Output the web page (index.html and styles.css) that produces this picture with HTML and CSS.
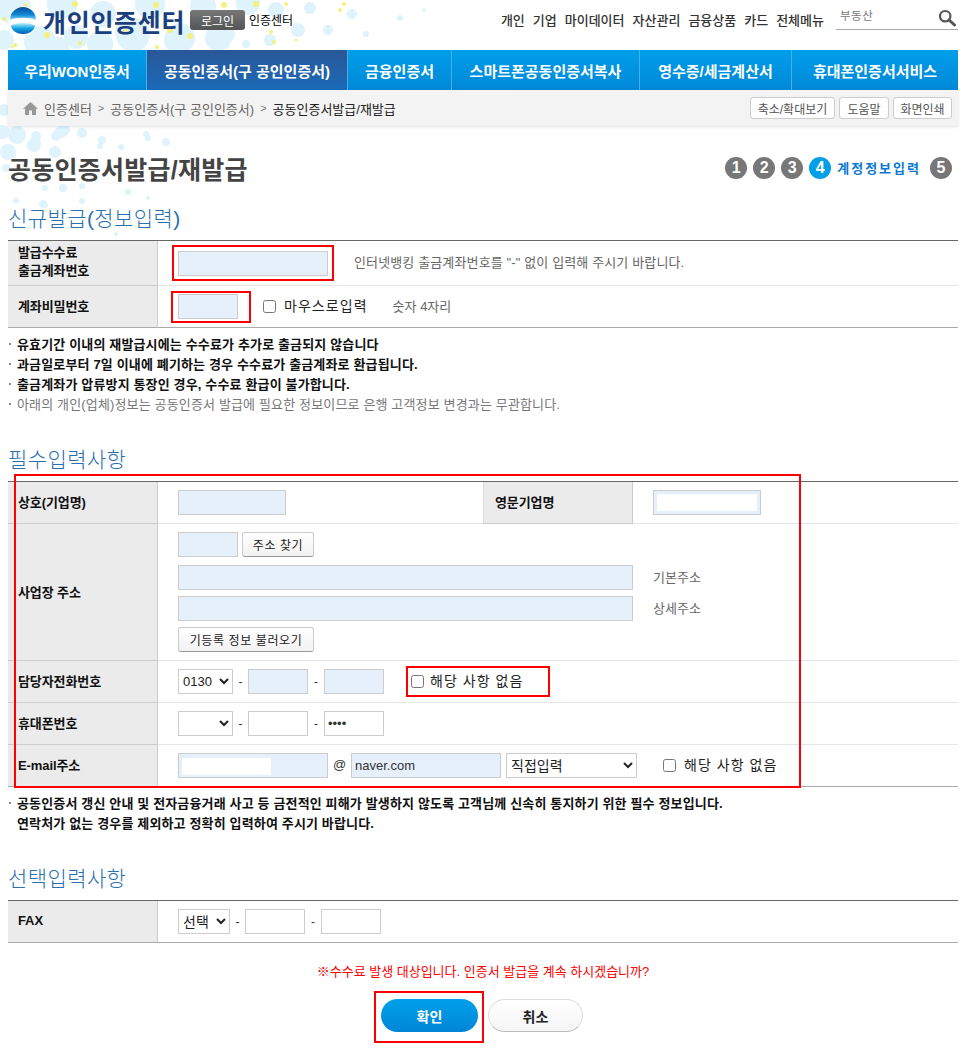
FILE: index.html
```html
<!DOCTYPE html>
<html lang="ko">
<head>
<meta charset="utf-8">
<title>공동인증서발급/재발급</title>
<link rel="stylesheet" href="styles.css">
</head>
<body>
<div class="page">
  <svg class="deco" width="520" height="310" viewBox="0 0 520 310" aria-hidden="true">
    <g fill="#def3fc">
      <circle cx="14" cy="8" r="17"/><circle cx="62" cy="4" r="15"/><circle cx="103" cy="14" r="13"/><circle cx="150" cy="4" r="15"/><circle cx="203" cy="6" r="13"/><circle cx="248" cy="3" r="12"/><circle cx="180" cy="38" r="15"/><circle cx="133" cy="35" r="17"/><circle cx="76" cy="37" r="12"/><circle cx="4" cy="40" r="10"/><circle cx="40" cy="42" r="16"/><circle cx="100" cy="44" r="13"/><circle cx="218" cy="38" r="13"/><circle cx="130" cy="32" r="15"/><circle cx="225" cy="34" r="10"/><circle cx="58" cy="48" r="11"/><circle cx="178" cy="40" r="14"/><circle cx="224" cy="43" r="6"/><circle cx="276" cy="10" r="8"/><circle cx="310" cy="8" r="6"/><circle cx="328" cy="30" r="5"/><circle cx="352" cy="14" r="5"/><circle cx="298" cy="30" r="7"/><circle cx="270" cy="40" r="6"/><circle cx="246" cy="44" r="4"/><circle cx="366" cy="34" r="3"/><circle cx="400" cy="18" r="3"/><circle cx="424" cy="10" r="2"/><circle cx="4" cy="110" r="6"/><circle cx="3" cy="132" r="7"/>
      <circle cx="16" cy="134" r="7"/><circle cx="64" cy="130" r="6"/><circle cx="17" cy="135" r="9"/><circle cx="36" cy="136" r="5"/><circle cx="61" cy="132" r="6"/><circle cx="35" cy="143" r="6"/><circle cx="82" cy="133" r="5"/><circle cx="56" cy="136" r="5"/><circle cx="34" cy="145" r="7"/><circle cx="8" cy="152" r="8"/><circle cx="100" cy="146" r="3"/><circle cx="146" cy="134" r="3"/><circle cx="166" cy="142" r="4"/><circle cx="102" cy="140" r="4"/><circle cx="55" cy="152" r="6"/><circle cx="121" cy="147" r="3"/><circle cx="148" cy="138" r="3"/><circle cx="6" cy="168" r="4"/><circle cx="45" cy="188" r="3"/><circle cx="43" cy="204" r="4"/><circle cx="17" cy="180" r="3"/><circle cx="63" cy="188" r="4"/><circle cx="82" cy="186" r="3"/><circle cx="128" cy="192" r="3"/><circle cx="16" cy="201" r="3"/><circle cx="45" cy="205" r="3"/><circle cx="82" cy="201" r="3"/><circle cx="128" cy="193" r="2"/><circle cx="148" cy="198" r="2"/><circle cx="116" cy="234" r="2"/><circle cx="30" cy="220" r="2"/>
    </g>
    <g fill="#f5f07c">
      <circle cx="26" cy="5" r="2"/><circle cx="75" cy="4" r="3"/><circle cx="156" cy="5" r="3"/><circle cx="224" cy="5" r="3"/><circle cx="256" cy="4" r="3"/><circle cx="4" cy="19" r="2"/><circle cx="47" cy="35" r="3"/><circle cx="15" cy="45" r="2"/><circle cx="125" cy="31" r="2"/><circle cx="170" cy="30" r="3"/><circle cx="80" cy="43" r="2"/><circle cx="190" cy="36" r="3"/><circle cx="157" cy="47" r="2"/><circle cx="271" cy="32" r="2"/><circle cx="286" cy="4" r="2"/><circle cx="340" cy="10" r="2"/><circle cx="274" cy="42" r="2"/><circle cx="296" cy="40" r="1.5"/><circle cx="344" cy="4" r="2"/><circle cx="12" cy="47" r="1.5"/>
    </g>
  </svg>

  <header class="top">
    <div class="brand">
      <svg class="logo" width="30" height="30" viewBox="0 0 30 30" aria-hidden="true">
        <defs>
          <linearGradient id="dome" x1="0" y1="0" x2="0" y2="1"><stop offset="0" stop-color="#0b4a9e"/><stop offset=".6" stop-color="#0d8ad6"/><stop offset="1" stop-color="#8fdcf6"/></linearGradient>
          <linearGradient id="base" x1="0" y1="0" x2="0" y2="1"><stop offset="0" stop-color="#bdeefb"/><stop offset=".5" stop-color="#12a2e4"/><stop offset="1" stop-color="#0a5cb4"/></linearGradient>
        </defs>
        <circle cx="15" cy="15" r="14.5" fill="#fff"/>
        <path d="M2 14A13 13 0 0 1 28 14C22 11 8 11 2 14Z" fill="url(#dome)"/>
        <path d="M2.6 20C7 16 23 16 27.4 20A13 13 0 0 1 15 28A13 13 0 0 1 2.6 20Z" fill="url(#base)"/>
      </svg>
      <span class="brand-name">개인인증센터</span>
      <a class="login">로그인</a>
      <span class="brand-sub">인증센터</span>
    </div>
    <nav class="util">
      <a>개인</a><a>기업</a><a>마이데이터</a><a>자산관리</a><a>금융상품</a><a>카드</a><a>전체메뉴</a>
    </nav>
    <div class="search">
      <span>부동산</span>
      <svg width="18" height="18" viewBox="0 0 18 18" aria-hidden="true"><circle cx="7.2" cy="7.2" r="5.2" fill="none" stroke="#555" stroke-width="2.2"/><path d="M11 11l5.5 5" stroke="#555" stroke-width="3" stroke-linecap="round"/></svg>
    </div>
  </header>

  <nav class="gnb">
    <a class="w1">우리WON인증서</a>
    <a class="w2 on">공동인증서(구 공인인증서)</a>
    <a class="w3">금융인증서</a>
    <a class="w4">스마트폰공동인증서복사</a>
    <a class="w5">영수증/세금계산서</a>
    <a class="w6">휴대폰인증서서비스</a>
  </nav>

  <div class="crumb">
    <svg class="home" width="15" height="13" viewBox="0 0 15 13" aria-hidden="true"><path d="M7.5 0L15 6.8H13V13H9V8.5H6V13H2V6.8H0Z" fill="#999"/></svg>
    <span class="c-item">인증센터</span><span class="c-sep">&gt;</span>
    <span class="c-item">공동인증서(구 공인인증서)</span><span class="c-sep">&gt;</span>
    <span class="c-now">공동인증서발급/재발급</span>
    <div class="c-tools">
      <button class="tool t85">축소/확대보기</button><button class="tool t50">도움말</button><button class="tool t59">화면인쇄</button>
    </div>
  </div>

  <div class="title-row">
    <h1>공동인증서발급/재발급</h1>
    <ol class="steps">
      <li class="dot">1</li><li class="dot">2</li><li class="dot">3</li><li class="dot on">4</li>
      <li class="step-label">계정정보입력</li><li class="dot">5</li>
    </ol>
  </div>

  <h2>신규발급(정보입력)</h2>
  <table class="form">
    <colgroup><col class="c-th"><col></colgroup>
    <tr class="r45">
      <th class="two-line">발급수수료<br>출금계좌번호</th>
      <td><div class="line">
        <span class="mark m-acc"><input class="in i150" type="text"></span>
        <span class="hint h-acc">인터넷뱅킹 출금계좌번호를 "-" 없이 입력해 주시기 바랍니다.</span>
      </div></td>
    </tr>
    <tr>
      <th>계좌비밀번호</th>
      <td class="td-pw"><div class="line">
        <span class="mark m-pw"><input class="in i60" type="text"></span>
        <label class="check c-mouse"><input type="checkbox">마우스로입력</label>
        <span class="hint h-pw">숫자 4자리</span>
      </div></td>
    </tr>
  </table>

  <ul class="notes">
    <li>유효기간 이내의 재발급시에는 수수료가 추가로 출금되지 않습니다</li>
    <li>과금일로부터 7일 이내에 폐기하는 경우 수수료가 출금계좌로 환급됩니다.</li>
    <li>출금계좌가 압류방지 통장인 경우, 수수료 환급이 불가합니다.</li>
    <li class="soft">아래의 개인(업체)정보는 공동인증서 발급에 필요한 정보이므로 은행 고객정보 변경과는 무관합니다.</li>
  </ul>

  <h2>필수입력사항</h2>
  <div class="req-wrap">
    <table class="form">
      <colgroup><col class="c-th"><col class="c-mid"><col class="c-th"><col></colgroup>
      <tr>
        <th>상호(기업명)</th>
        <td><input class="in i108" type="text"></td>
        <th class="th-mid">영문기업명</th>
        <td class="td-eng"><input class="in i108 masked" type="text"></td>
      </tr>
      <tr class="r137">
        <th>사업장 주소</th>
        <td colspan="3">
          <div class="addr">
            <div class="line"><input class="in i60" type="text"><button class="btn b-find">주소 찾기</button></div>
            <div class="line"><input class="in i455" type="text"><span class="hint h-addr">기본주소</span></div>
            <div class="line"><input class="in i455" type="text"><span class="hint h-addr">상세주소</span></div>
            <div class="line"><button class="btn b-load">기등록 정보 불러오기</button></div>
          </div>
        </td>
      </tr>
      <tr>
        <th>담당자전화번호</th>
        <td colspan="3"><div class="line">
          <select class="sel s55"><option>0130</option></select><span class="dash">-</span>
          <input class="in i60" type="text"><span class="dash d16">-</span>
          <input class="in i60" type="text">
          <span class="mark m-none"><label class="check"><input type="checkbox">해당 사항 없음</label></span>
        </div></td>
      </tr>
      <tr>
        <th>휴대폰번호</th>
        <td colspan="3"><div class="line">
          <select class="sel s55"><option></option></select><span class="dash">-</span>
          <input class="in i60 plain" type="text"><span class="dash d16">-</span>
          <input class="in i60 plain" type="password" value="1234">
        </div></td>
      </tr>
      <tr>
        <th>E-mail주소</th>
        <td colspan="3"><div class="line">
          <span class="redact-box"><input class="in i150" type="text"><span class="redact"></span></span>
          <span class="at">@</span>
          <input class="in i150 dom" type="text" value="naver.com">
          <select class="sel s131"><option>직접입력</option></select>
          <label class="check c-mail"><input type="checkbox">해당 사항 없음</label>
        </div></td>
      </tr>
    </table>
    <div class="big-mark"></div>
  </div>

  <ul class="notes">
    <li class="two">공동인증서 갱신 안내 및 전자금융거래 사고 등 금전적인 피해가 발생하지 않도록 고객님께 신속히 통지하기 위한 필수 정보입니다.<br>연락처가 없는 경우를 제외하고 정확히 입력하여 주시기 바랍니다.</li>
  </ul>

  <h2>선택입력사항</h2>
  <table class="form">
    <colgroup><col class="c-th"><col></colgroup>
    <tr>
      <th>FAX</th>
      <td><div class="line">
        <select class="sel s52"><option>선택</option></select><span class="dash">-</span>
        <input class="in i60 plain" type="text"><span class="dash d16">-</span>
        <input class="in i60 plain" type="text">
      </div></td>
    </tr>
  </table>

  <p class="warn">※수수료 발생 대상입니다. 인증서 발급을 계속 하시겠습니까?</p>
  <div class="actions">
    <span class="mark m-ok"><button class="pill ok">확인</button></span>
    <button class="pill cancel">취소</button>
  </div>
</div>
</body>
</html>
```

FILE: styles.css
```css
* { box-sizing: border-box; }
html, body { margin: 0; padding: 0; background: #fff; }
body { font-family: "Liberation Sans", "Noto Sans CJK KR", sans-serif; font-size: 13px; color: #000; }
a { color: inherit; text-decoration: none; }

.page { position: relative; z-index: 0; width: 966px; height: 1053px; padding: 0 8px; overflow: hidden; }
.deco { position: absolute; left: 0; top: 0; z-index: -1; }

/* header */
.top { display: flex; align-items: flex-start; height: 50px; }
.brand { display: flex; align-items: center; height: 42px; }
.logo { margin: 0 5px 0 0; }
.brand-name { font-size: 25px; font-weight: 700; color: #1b3f7e; letter-spacing: .7px; width: 147px; white-space: nowrap; }
.login { display: flex; align-items: center; justify-content: center; width: 55px; height: 20px; margin-top: -2px; border-radius: 3px; background: linear-gradient(#777, #555); color: #fff; font-size: 12px; }
.brand-sub { margin: -3px 0 0 4px; font-size: 12px; }
.util { display: flex; gap: 8px; margin-left: auto; padding-top: 10px; font-size: 13px; font-weight: 500; color: #333; white-space: nowrap; }
.search { display: flex; justify-content: space-between; width: 122px; height: 30px; margin-left: 12px; padding: 7px 2px 0 4px; border-bottom: 1px solid #aaa; color: #777; font-size: 11.5px; letter-spacing: .5px; }
.search svg { margin-top: 2px; }

/* main nav */
.gnb { display: flex; height: 40px; background: linear-gradient(#009ee9, #0088d8); }
.gnb a { display: flex; align-items: center; justify-content: center; height: 40px; border-right: 1px solid #4aaee8; color: #fff; font-size: 15px; font-weight: 700; white-space: nowrap; }
.gnb .on { background: linear-gradient(#2a5798, #1b6ab8); }
.gnb .w1 { width: 139px; }
.gnb .w2 { width: 201px; }
.gnb .w3 { width: 104px; }
.gnb .w4 { width: 188px; }
.gnb .w5 { width: 152px; }
.gnb .w6 { width: 166px; border-right: 0; }

/* breadcrumb */
.crumb { display: flex; align-items: center; height: 36px; padding-left: 15px; background: #f3f3f3; box-shadow: 0 1px 3px rgba(0,0,0,.12); color: #666; font-size: 13px; white-space: nowrap; }
.home { margin-right: 6px; }
.c-sep { margin: 0 6px; color: #777; font-size: 11px; }
.c-now { color: #222; }
.c-tools { display: flex; gap: 4px; margin-left: auto; margin-right: 6px; }
.tool { height: 22px; padding: 0; border: 1px solid #ccc; border-radius: 3px; background: #fff; color: #555; font: inherit; font-size: 12px; }
.t85 { width: 85px; }
.t50 { width: 50px; }
.t59 { width: 59px; }

/* title */
.title-row { display: flex; align-items: center; justify-content: space-between; height: 32px; margin: 26px 0 18px; }
h1 { margin: 0; font-size: 25px; font-weight: 700; color: #444; letter-spacing: .25px; }
.steps { display: flex; align-items: center; gap: 6px; margin: 0 6px 0 0; padding: 0; list-style: none; }
.dot { display: flex; align-items: center; justify-content: center; width: 22px; height: 22px; border-radius: 50%; background: #777; color: #fff; font-size: 16px; font-weight: 700; }
.dot.on { background: #009fe8; }
.step-label { margin: -2px 3px 0 0; color: #0a78d4; font-size: 13px; font-weight: 700; letter-spacing: 2px; }

h2 { height: 30px; margin: 0 0 8px; font-size: 21px; font-weight: 300; line-height: 34px; color: #2a6fb0; letter-spacing: .4px; }

/* tables */
.form { width: 950px; border-collapse: separate; border-spacing: 0; border-top: 1px solid #666; table-layout: fixed; }
.c-th { width: 150px; }
.c-mid { width: 325px; }
.form tr { height: 42px; }
.form tr.r45 { height: 45px; }
.form tr.r137 { height: 137px; }
.form th { padding: 0 0 2px 10px; border-right: 1px solid #ccc; border-bottom: 1px solid #ccc; background: #ebebeb; color: #111; font-size: 13px; font-weight: 700; text-align: left; letter-spacing: -.1px; }
.form th.two-line { line-height: 18px; }
.form th.th-mid { padding-left: 11px; border-left: 1px solid #ddd; }
.form td { padding: 0 0 0 20px; border-bottom: 1px solid #e5e5e5; }
.form tr:last-child th, .form tr:last-child td { border-bottom-color: #aaa; }
.form .td-eng { padding-left: 20px; }
.line { display: flex; align-items: center; white-space: nowrap; }

.in { height: 25px; padding: 0 3px; border: 1px solid #ccc; background: #e6f0fa; font: inherit; font-size: 13px; color: #333; }
.i60 { width: 60px; }
.i108 { width: 108px; }
.i150 { width: 150px; }
.i455 { width: 455px; }
.plain { background: #fff; }
.masked { box-shadow: inset 0 0 0 3px #e6f0fa; background: #fff; }
.dom { margin-left: 0; }
.sel { height: 25px; border: 1px solid #ccc; border-radius: 0; background: #fff; font: inherit; font-size: 14px; color: #222; }
.s52 { width: 52px; }
.s55 { width: 55px; font-size: 13px; }
.s131 { width: 131px; margin-left: 5px; }
.dash { width: 15px; text-align: center; color: #333; font-size: 12px; }
.d16 { width: 16px; }
.at { width: 23px; padding-bottom: 3px; text-align: center; font-size: 13px; color: #333; }

.mark { display: inline-flex; align-items: center; border: 2px solid #f00; }
.m-acc { width: 162px; height: 36px; margin-left: -6px; padding-left: 4px; }
.m-pw { width: 80px; height: 32px; margin-left: -7px; padding-left: 5px; }
.m-none { width: 144px; height: 31px; margin-left: 22px; padding-left: 3px; }
.m-ok { width: 110px; height: 52px; padding: 6px 0 0 5px; align-items: flex-start; }

.check { display: inline-flex; align-items: center; padding-bottom: 4px; font-size: 14px; color: #222; letter-spacing: 1.05px; }
.check input { width: 13px; height: 13px; margin: 4px 6px 0 0; }
.c-mouse { margin-left: 12px; }
.c-mouse input, .c-mail input { margin-right: 8px; }
.c-mail { margin-left: 26px; }
.hint { padding-bottom: 3px; color: #666; font-size: 13px; }
.h-acc { margin-left: 20px; letter-spacing: .13px; }
.h-pw { margin-left: 25px; }
.h-addr { margin-left: 20px; }

.addr { display: flex; flex-direction: column; gap: 6px; }
.addr .line:nth-child(2) { margin-top: 2px; }
.btn { height: 25px; border: 1px solid #ccc; border-bottom-color: #999; border-radius: 3px; background: linear-gradient(#fff, #f2f2f2); color: #222; font: inherit; font-size: 12px; letter-spacing: .6px; padding: 0; }
.b-find { width: 72px; margin-left: 4px; }
.b-load { width: 136px; }

.redact-box { position: relative; display: inline-flex; }
.redact { position: absolute; left: 4px; top: 5px; width: 89px; height: 17px; background: #fff; }

.req-wrap { position: relative; }
.big-mark { position: absolute; left: 6px; top: -7px; width: 787px; height: 314px; border: 2px solid #f00; pointer-events: none; }

/* notes */
.notes { margin: 6px 0 29px; padding: 0 0 0 9px; list-style: none; font-size: 13px; font-weight: 700; color: #111; letter-spacing: .15px; }
.notes li { position: relative; height: 20px; line-height: 22px; white-space: nowrap; }
.notes li.two { height: 40px; line-height: 20px; padding-top: 1px; }
.notes li::before { content: ""; position: absolute; left: -8px; top: 9px; width: 2px; height: 2px; background: #888; }
.notes .soft { color: #777; font-weight: 400; }

/* bottom */
.warn { height: 20px; margin: 18px 0 0; color: #f00; font-size: 13px; line-height: 22px; text-align: center; }
.actions { display: flex; justify-content: center; align-items: flex-start; gap: 4px; margin-top: 10px; padding-right: 9px; }
.pill { width: 97px; height: 33px; border: 0; border-radius: 17px; font: inherit; font-size: 14px; font-weight: 700; }
.ok { background: linear-gradient(#00a0ea, #0085d6); color: #fff; }
.cancel { width: 95px; margin-top: 8px; border: 1px solid #ddd; border-bottom-color: #bbb; background: linear-gradient(#fff, #f5f5f5); color: #222; }
```
